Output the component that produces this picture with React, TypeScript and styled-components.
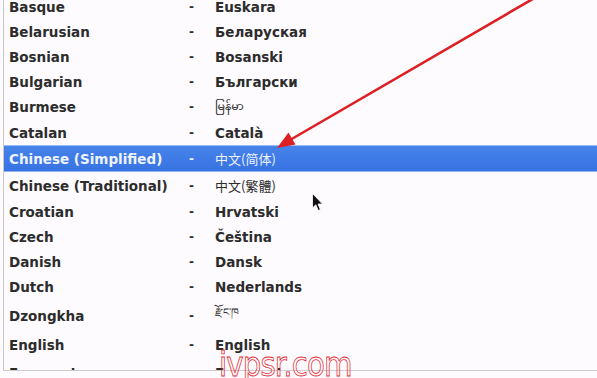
import React from 'react'
import styled, { createGlobalStyle } from 'styled-components'

const languages = [
  { name: 'Basque', native: 'Euskara', h: 25 },
  { name: 'Belarusian', native: 'Беларуская', h: 25 },
  { name: 'Bosnian', native: 'Bosanski', h: 25 },
  { name: 'Bulgarian', native: 'Български', h: 25 },
  { name: 'Burmese', native: 'မြန်မာ', h: 26, script: true },
  { name: 'Catalan', native: 'Català', h: 25 },
  { name: 'Chinese (Simplified)', native: '中文(简体)', h: 27, cjk: true, selected: true },
  { name: 'Chinese (Traditional)', native: '中文(繁體)', h: 27, cjk: true },
  { name: 'Croatian', native: 'Hrvatski', h: 25 },
  { name: 'Czech', native: 'Čeština', h: 25 },
  { name: 'Danish', native: 'Dansk', h: 25 },
  { name: 'Dutch', native: 'Nederlands', h: 25 },
  { name: 'Dzongkha', native: 'རྫོང་ཁ', h: 30, script: true },
  { name: 'English', native: 'English', h: 31 },
  { name: 'Esperanto', native: 'Esperanto', h: 26 },
]

const GlobalStyle = createGlobalStyle`
  html, body {
    margin: 0;
    padding: 0;
    background: #fdfbfd;
  }
`

const Screen = styled.div`
  position: relative;
  width: 597px;
  height: 378px;
  overflow: hidden;
  background: #fdfbfd;
  font-family: 'DejaVu Sans', 'Noto Sans', sans-serif;
`

const ListBox = styled.div`
  margin-left: 3px;
  height: 370px;
  border-left: 1px solid #c9c7c9;
  border-bottom: 1px solid #cfcdcf;
  overflow: hidden;
`

const ListInner = styled.div`
  margin-top: -6px;
`

const Row = styled.div<{ $selected?: boolean }>`
  box-sizing: border-box;
  display: grid;
  grid-template-columns: 180px 26px 1fr;
  align-items: center;
  padding-left: 5px;
  font-size: 13.5px;
  font-weight: bold;
  color: ${({ $selected }) => ($selected ? '#eef3fd' : '#2c2c2c')};
  background: ${({ $selected }) =>
    $selected ? 'linear-gradient(#4683ea, #3873e3)' : 'transparent'};
  border-top: 1px solid ${({ $selected }) => ($selected ? '#9cbdf2' : 'transparent')};
  border-bottom: 1px solid ${({ $selected }) => ($selected ? '#8fb2ee' : 'transparent')};
  white-space: nowrap;
`

const Dash = styled.span`
  font-size: 12px;
`

const Native = styled.span<{ $cjk?: boolean; $script?: boolean }>`
  font-family: ${({ $cjk, $script }) =>
    $cjk
      ? "'Noto Sans CJK SC', sans-serif"
      : $script
        ? "'Noto Sans Myanmar', 'Noto Sans Tibetan', 'DejaVu Sans', sans-serif"
        : "'DejaVu Sans', sans-serif"};
  font-weight: ${({ $cjk, $script }) => ($cjk || $script ? 'normal' : 'bold')};
  font-size: ${({ $cjk, $script }) => ($cjk ? '13px' : $script ? '11px' : '13.5px')};
`

const Overlay = styled.svg`
  position: absolute;
  left: 0;
  top: 0;
  pointer-events: none;
`

const Watermark = styled.div`
  position: absolute;
  left: 219px;
  top: 347px;
  font-family: 'DejaVu Sans', sans-serif;
  font-size: 34px;
  line-height: 1;
  color: transparent;
  -webkit-text-stroke: 0.8px #e3262c;
  transform: scaleX(0.86);
  transform-origin: left top;
  letter-spacing: -1px;
  pointer-events: none;
`

export default function App() {
  return (
    <>
      <GlobalStyle />
      <Screen>
        <ListBox>
          <ListInner>
            {languages.map((l) => (
              <Row key={l.name} $selected={l.selected} style={{ height: l.h }}>
                <span>{l.name}</span>
                <Dash>-</Dash>
                <Native $cjk={l.cjk} $script={l.script}>
                  {l.native}
                </Native>
              </Row>
            ))}
          </ListInner>
        </ListBox>

        <Overlay width="597" height="378" viewBox="0 0 597 378">
          <line x1="562" y1="-18" x2="290" y2="140" stroke="#dd1f24" strokeWidth="2.6" strokeLinecap="round" />
          <polygon points="277,148 295.5,144.5 288.5,132.5" fill="#dd1f24" />
          <path
            d="M312.5 193.5 L312.5 208 L315.8 204.8 L318.3 210.5 L320.4 209.6 L318 204 L322.5 204 Z"
            fill="#111"
            stroke="#fff"
            strokeWidth="0.8"
          />
        </Overlay>

        <Watermark>ivpsr.com</Watermark>
      </Screen>
    </>
  )
}
